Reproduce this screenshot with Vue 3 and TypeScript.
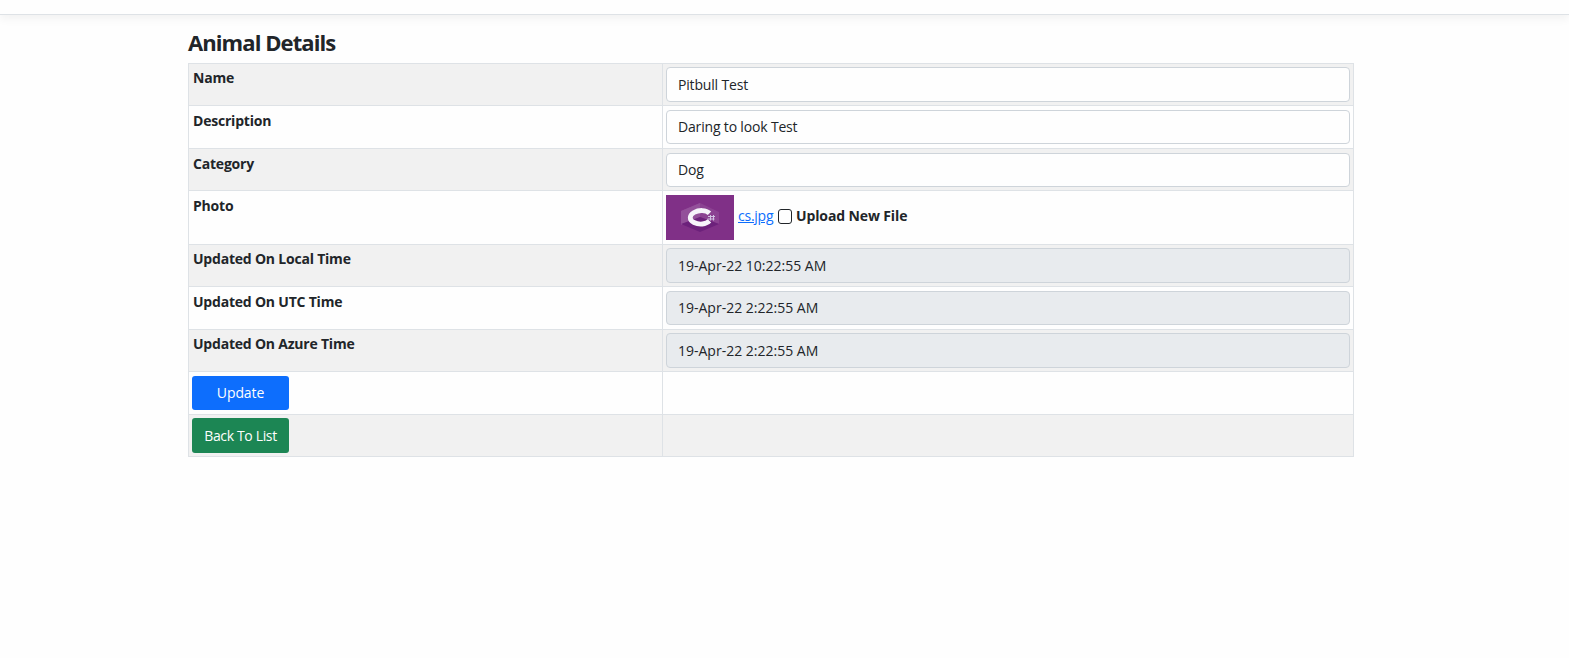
<script setup lang="ts">
import { ref } from 'vue'

interface Field {
  label: string
  value: string
  readonly: boolean
}

const details = ref<Field[]>([
  { label: 'Name', value: 'Pitbull Test', readonly: false },
  { label: 'Description', value: 'Daring to look Test', readonly: false },
  { label: 'Category', value: 'Dog', readonly: false },
])

const timestamps = ref<Field[]>([
  { label: 'Updated On Local Time', value: '19-Apr-22 10:22:55 AM', readonly: true },
  { label: 'Updated On UTC Time', value: '19-Apr-22 2:22:55 AM', readonly: true },
  { label: 'Updated On Azure Time', value: '19-Apr-22 2:22:55 AM', readonly: true },
])

const uploadNew = ref(false)
</script>

<template>
  <div class="page">
    <header class="navbar"></header>
    <main class="container">
      <h1 class="title">Animal Details</h1>
      <div class="table">
        <div v-for="f in details" :key="f.label" class="row">
          <div class="cell label">{{ f.label }}</div>
          <div class="cell"><input v-model="f.value" class="control" type="text" /></div>
        </div>
        <div class="row">
          <div class="cell label photo-label">Photo</div>
          <div class="cell photo">
            <svg class="thumb" viewBox="0 0 68 45" preserveAspectRatio="none">
              <rect width="68" height="45" fill="#803087" />
              <g class="emblem">
                <path d="M34 8 53 17v12L34 22 15 30V16z" fill="#8b4292" />
                <path d="M34 8v14L15 30V16z" fill="#93509a" />
                <path d="M15 29 34 22l19 7-19 8z" fill="#6c217b" />
                <path d="M43.500 18.300C40 14.800 33 14.700 28 17.500c-5 3-5 7.500 0 10 5 2.500 12 2 15.500-1.600" fill="none" stroke="#f6f3fa" stroke-width="4.800" />
                <path d="M42 21.500h7M41.500 24h7M44.500 20v5.500M47.500 20v5.500" stroke="#d0c2e2" stroke-width="1" />
              </g>
            </svg>
            <a class="file" href="#">cs.jpg</a>
            <input id="upload" v-model="uploadNew" class="check" type="checkbox" />
            <label class="upload" for="upload">Upload New File</label>
          </div>
        </div>
        <div v-for="f in timestamps" :key="f.label" class="row">
          <div class="cell label">{{ f.label }}</div>
          <div class="cell"><input :value="f.value" class="control readonly" type="text" readonly /></div>
        </div>
        <div class="row">
          <div class="cell"><button class="btn primary" type="button">Update</button></div>
          <div class="cell"></div>
        </div>
        <div class="row">
          <div class="cell"><button class="btn success" type="button">Back To List</button></div>
          <div class="cell"></div>
        </div>
      </div>
    </main>
  </div>
</template>

<style>
body {
  margin: 0;
  background: #fefefe;
}
</style>

<style scoped>
.page {
  height: 658px;
  overflow: hidden;
  color: #212529;
  background: #fefefe;
  font: 14px/21px "Segoe UI", "Open Sans", "Noto Sans", sans-serif;
}
.page * {
  box-sizing: border-box;
}
.navbar {
  height: 15px;
  border-bottom: 1px solid #dee2e6;
  box-shadow: 0 4px 10px rgba(0, 0, 0, 0.05);
}
.container {
  width: 1166px;
  margin-left: 188px;
}
.title {
  margin: 0;
  padding-top: 14px;
  height: 48px;
  font-size: 22px;
  line-height: 27px;
  font-weight: 700;
  letter-spacing: -0.92px;
}
.table {
  display: grid;
  grid-template-rows: 42px 43px 42px 54px 42px 43px 42px 43px 43px;
  border-right: 1px solid #dee2e6;
}
.row {
  display: grid;
  grid-template-columns: 474px 1fr;
  border-top: 1px solid #dee2e6;
}
.row:last-child {
  border-bottom: 1px solid #dee2e6;
}
.row:nth-child(odd) {
  background: #f1f1f1;
}
.cell {
  display: flex;
  align-items: flex-start;
  border-left: 1px solid #dee2e6;
  padding: 3px;
}
.row:nth-child(2) .cell,
.row:nth-child(3) .cell,
.row:nth-child(6) .cell,
.row:nth-child(8) .cell {
  padding-top: 4px;
}
.cell.label {
  padding-left: 4px;
  font-weight: 700;
  letter-spacing: -0.21px;
}
.cell.photo-label {
  padding-top: 4px;
}
.control {
  width: 100%;
  height: 35px;
  padding: 0 11px;
  border: 1px solid #ced4da;
  border-radius: 4px;
  outline: none;
  background: #fefefe;
  color: #212529;
  font: inherit;
  letter-spacing: -0.17px;
}
.readonly {
  background: #e8ebee;
  letter-spacing: 0;
}
.row:nth-child(2) .control,
.row:nth-child(3) .control,
.row:nth-child(6) .control,
.row:nth-child(8) .btn {
  height: 34px;
  padding-bottom: 1px;
}
.cell.photo {
  padding-top: 4px;
}
.thumb {
  width: 68px;
  height: 45px;
}
.emblem {
  filter: blur(0.4px);
}
.file {
  margin: 10px 0 0 4px;
  width: 40px;
  color: #0d6efd;
  letter-spacing: -0.25px;
}
.check {
  appearance: none;
  width: 14px;
  height: 15px;
  margin: 14px 4px 0 0;
  border: 1px solid #212529;
  border-radius: 3px;
  background: #fefefe;
}
.check:checked {
  background: #0d6efd;
}
.upload {
  margin-top: 10px;
  font-weight: 700;
  letter-spacing: -0.12px;
}
.btn {
  width: 97px;
  height: 35px;
  padding: 0;
  border: 0;
  border-radius: 3px;
  color: #fefefe;
  font: inherit;
  letter-spacing: -0.35px;
}
.primary {
  background: #0d6efd;
  letter-spacing: -0.1px;
}
.success {
  background: #1c8654;
}
</style>
